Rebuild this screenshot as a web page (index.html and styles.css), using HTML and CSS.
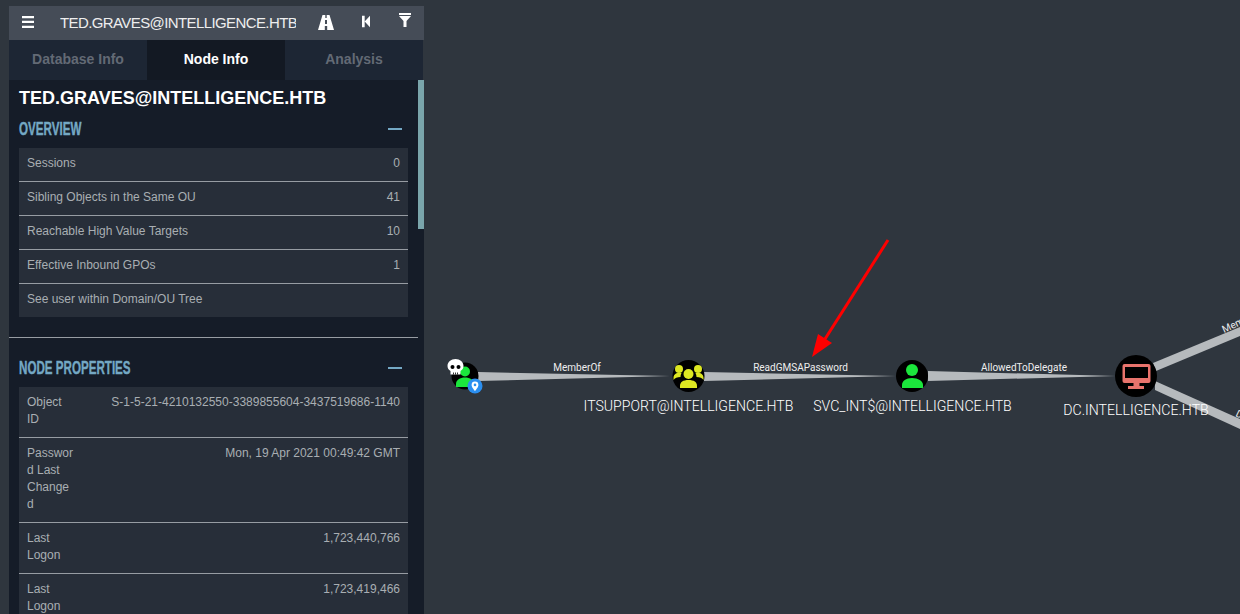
FILE: index.html
```html
<!DOCTYPE html>
<html lang="en">
<head>
    <meta charset="UTF-8">
    <meta name="viewport" content="width=device-width, initial-scale=1.0">
    <title>BloodHound</title>
    <link rel="stylesheet" href="styles.css">
</head>
<body>
    <svg class="graph" viewBox="0 0 1240 614" width="1240" height="614">
        <!-- edges -->
        <polygon class="edge" points="478,372 670,376 478,381"/>
        <polygon class="edge" points="704,372 896,376 704,381"/>
        <polygon class="edge" points="928,371 1116,376 928,381"/>
        <polygon class="edge" points="1153,363 1240,327 1240,336 1156,371"/>
        <polygon class="edge" points="1155,381 1240,419 1240,429 1155,390"/>

        <text class="edge-label" x="577" y="371">MemberOf</text>
        <text class="edge-label" x="800.5" y="371">ReadGMSAPassword</text>
        <text class="edge-label" x="1024" y="371">AllowedToDelegate</text>
        <text class="edge-label edge-label-start" transform="translate(1224,333) rotate(-25)">MemberOf</text>
        <text class="edge-label edge-label-start" transform="translate(1235,416) rotate(25)">DCSync</text>

        <!-- owned user -->
        <circle class="node" cx="465" cy="376" r="13.5"/>
        <circle class="green" cx="465" cy="371.500" r="5"/>
        <path class="green" d="M456 387v-3c0-4 4-6.500 9-6.500s9 2.500 9 6.500v3z"/>
        <path class="white" d="M455.500 359c-4.500 0-8 3-8 7 0 2.300 1.200 4 3 5v3.500h10V371c1.800-1 3-2.700 3-5 0-4-3.500-7-8-7z"/>
        <circle class="node" cx="452.500" cy="367" r="2"/>
        <circle class="node" cx="458.500" cy="367" r="2"/>
        <path class="node" d="M453.200 372.500h.8v2h-.8zM455.100 372.500h.8v2h-.8zM457 372.500h.8v2h-.8z"/>
        <circle class="blue" cx="475" cy="386" r="7.500"/>
        <path class="white" d="M475 381.500a3.400 3.400 0 0 0-3.400 3.400c0 2.300 3.400 6 3.400 6s3.400-3.700 3.400-6a3.400 3.400 0 0 0-3.400-3.400z"/>
        <circle class="blue" cx="475" cy="384.900" r="1.300"/>

        <!-- group -->
        <circle class="node" cx="688.500" cy="376" r="16"/>
        <g class="yellow">
            <circle cx="679" cy="369" r="4"/>
            <circle cx="698" cy="369" r="4"/>
            <circle cx="688.500" cy="374" r="5"/>
            <path d="M673.500 380v-2c0-3 2-5 5-5h3a8 8 0 0 0-1 4c-3 0-6 1-7 3z"/>
            <path d="M703.500 380v-2c0-3-2-5-5-5h-3a8 8 0 0 1 1 4c3 0 6 1 7 3z"/>
            <path d="M680 388v-2c0-4 3-6 8.500-6s8.500 2 8.500 6v2z"/>
        </g>

        <!-- service account -->
        <circle class="node" cx="912" cy="376" r="16"/>
        <circle class="green" cx="912" cy="370" r="6"/>
        <path class="green" d="M902 388v-3c0-4 4-7 10-7s11 3 11 7v3z"/>

        <!-- computer -->
        <circle class="node" cx="1136" cy="376" r="21"/>
        <path class="salmon" fill-rule="evenodd" d="M1124.500 364h24a2 2 0 0 1 2 2v15a2 2 0 0 1-2 2h-24a2 2 0 0 1-2-2v-15a2 2 0 0 1 2-2zm.5 3v11h23v-11z"/>
        <rect class="salmon" x="1133.500" y="383" width="6" height="4"/>
        <rect class="salmon" x="1128" y="386" width="16" height="3"/>

        <text class="node-label" x="688.500" y="411">ITSUPPORT@INTELLIGENCE.HTB</text>
        <text class="node-label" x="912.500" y="411">SVC_INT$@INTELLIGENCE.HTB</text>
        <text class="node-label" x="1136" y="415">DC.INTELLIGENCE.HTB</text>

        <!-- annotation -->
        <line class="arrow-line" x1="888" y1="240" x2="825" y2="339"/>
        <polygon class="arrow-head" points="812,357 818,334 832,343"/>
    </svg>

    <div class="sidebar">
        <div class="search-bar">
            <button class="bar-btn menu-btn" type="button" aria-label="Menu">
                <svg viewBox="0 0 12 12" width="12" height="12"><path d="M0 0h12v2.300H0zM0 4.800h12v2.300H0zM0 9.700h12V12H0z"/></svg>
            </button>
            <div class="search-text">TED.GRAVES@INTELLIGENCE.HTB</div>
            <button class="bar-btn road-btn" type="button" aria-label="Pathfinding">
                <svg viewBox="0 0 16 15" width="16" height="15"><path fill-rule="evenodd" d="M4.500 0h2.800v3h1.400V0h2.800L16 15H9.200V11H6.800v4H0zM7 5v4h2V5z"/></svg>
            </button>
            <button class="bar-btn back-btn" type="button" aria-label="Back">
                <svg viewBox="0 0 9 13" width="8" height="13"><path d="M0 0h3v13H0zM3 6.500l6-6.500v13z"/></svg>
            </button>
            <button class="bar-btn filter-btn" type="button" aria-label="Filter">
                <svg viewBox="0 0 12 14" width="12" height="14"><path d="M0 0h12v2H0zM0 3h12L7.500 8v6h-3V8z"/></svg>
            </button>
        </div>

        <div class="tabs">
            <div class="tab">Database Info</div>
            <div class="tab active">Node Info</div>
            <div class="tab">Analysis</div>
        </div>

        <div class="panel">
            <div class="panel-body">
                <h3 class="node-title">TED.GRAVES@INTELLIGENCE.HTB</h3>

                <div class="section-head">
                    <span class="section-name">OVERVIEW</span>
                    <span class="collapse-bar"></span>
                </div>
                <table class="info-table">
                    <tr><td>Sessions</td><td>0</td></tr>
                    <tr><td>Sibling Objects in the Same OU</td><td>41</td></tr>
                    <tr><td>Reachable High Value Targets</td><td>10</td></tr>
                    <tr><td>Effective Inbound GPOs</td><td>1</td></tr>
                    <tr><td>See user within Domain/OU Tree</td><td></td></tr>
                </table>

                <hr class="divider">

                <div class="section-head">
                    <span class="section-name">NODE PROPERTIES</span>
                    <span class="collapse-bar"></span>
                </div>
                <table class="info-table props-table">
                    <tr><td>Object ID</td><td>S-1-5-21-4210132550-3389855604-3437519686-1140</td></tr>
                    <tr><td>Password Last Changed</td><td>Mon, 19 Apr 2021 00:49:42 GMT</td></tr>
                    <tr><td>Last Logon</td><td>1,723,440,766</td></tr>
                    <tr><td>Last Logon</td><td>1,723,419,466</td></tr>
                </table>
            </div>
            <div class="scroll-track"><div class="scroll-thumb"></div></div>
        </div>
    </div>
</body>
</html>
```

FILE: styles.css
```css
html, body {
    margin: 0;
    height: 614px;
    overflow: hidden;
}
body {
    background-color: #2f363e;
    font-family: "Liberation Sans", Arial, sans-serif;
}

/* graph canvas */
.graph {
    position: absolute;
    left: 0;
    top: 0;
}
.edge { fill: #b6babd; }
.node { fill: #000; }
.green { fill: #1be63c; }
.yellow { fill: #dde722; }
.salmon { fill: #e8736c; }
.white { fill: #fff; }
.blue { fill: #2b8ff0; }
.edge-label {
    font: 10px Roboto, sans-serif;
    fill: #eee;
    text-anchor: middle;
}
.edge-label-start { text-anchor: start; }
.node-label {
    font: 300 14.1px Roboto, sans-serif;
    fill: #fff;
    text-anchor: middle;
}
.arrow-line { stroke: #f00; stroke-width: 3; }
.arrow-head { fill: #f00; }

/* sidebar */
.sidebar {
    position: absolute;
    left: 9px;
    top: 6px;
    width: 415px;
    height: 608px;
    display: flex;
    flex-direction: column;
}
.search-bar {
    height: 34px;
    background-color: #454c57;
    display: flex;
    align-items: center;
    flex: none;
}
.bar-btn {
    background: none;
    border: none;
    padding: 0;
    display: flex;
    align-items: center;
    justify-content: center;
    flex: none;
}
.bar-btn svg { fill: #fff; display: block; }
.menu-btn { margin: 0 0 2px 13px; }
.search-text {
    margin: 0 0 2px 26px;
    width: 236px;
    flex: none;
    overflow: hidden;
    white-space: nowrap;
    color: #eee;
    font-size: 15px;
    letter-spacing: -0.6px;
}
.road-btn { margin: 0 0 2px 22px; }
.back-btn { margin: 0 0 3px 28px; }
.filter-btn { margin: 0 0 6px 29px; }

.tabs {
    height: 40px;
    display: flex;
    flex: none;
    width: 414px;
}
.tab {
    flex: 1;
    background-color: #1d2634;
    color: #636a75;
    font-size: 14px;
    font-weight: bold;
    display: flex;
    align-items: center;
    justify-content: center;
    padding-bottom: 2px;
    box-sizing: border-box;
}
.tab.active {
    background-color: #131923;
    color: #fff;
}

.panel {
    flex: 1;
    display: flex;
    min-height: 0;
    background-color: #151c28;
    overflow: hidden;
}
.panel-body {
    width: 389px;
    padding: 0 10px;
    flex: none;
}
.scroll-track {
    width: 6px;
    flex: none;
}
.scroll-thumb {
    height: 149px;
    background-color: #7aa5ab;
}

.node-title {
    margin: 0;
    height: 32px;
    padding-top: 8px;
    box-sizing: border-box;
    font-size: 18px;
    line-height: 21px;
    font-weight: bold;
    color: #fff;
    white-space: nowrap;
}
.section-head {
    height: 32px;
    margin-bottom: 4px;
    padding-top: 2px;
    box-sizing: border-box;
    display: flex;
    align-items: center;
    justify-content: space-between;
}
.section-name {
    display: inline-block;
    font-size: 18px;
    font-weight: bold;
    color: #74a8c4;
    white-space: nowrap;
    -webkit-text-stroke: 0.4px #74a8c4;
    transform: scaleX(0.645);
    transform-origin: left center;
}
.collapse-bar {
    width: 14px;
    height: 2px;
    margin-right: 6px;
    background-color: #74a8c4;
}

.info-table {
    width: 389px;
    border-collapse: collapse;
    background-color: #272e39;
    font-size: 12px;
    line-height: 17px;
    color: #a9aeb3;
}
.info-table td {
    padding: 7px 8px 9px;
    border-top: 1px solid #979ca3;
    vertical-align: top;
}
.info-table tr:first-child td { border-top: none; }
.info-table td:last-child { text-align: right; }
.props-table { table-layout: fixed; }
.props-table td:first-child {
    width: 48px;
    word-wrap: break-word;
}
.divider {
    margin: 20px 0 13px -10px;
    width: 409px;
    height: 1px;
    border: none;
    background-color: #979ca3;
}
```
